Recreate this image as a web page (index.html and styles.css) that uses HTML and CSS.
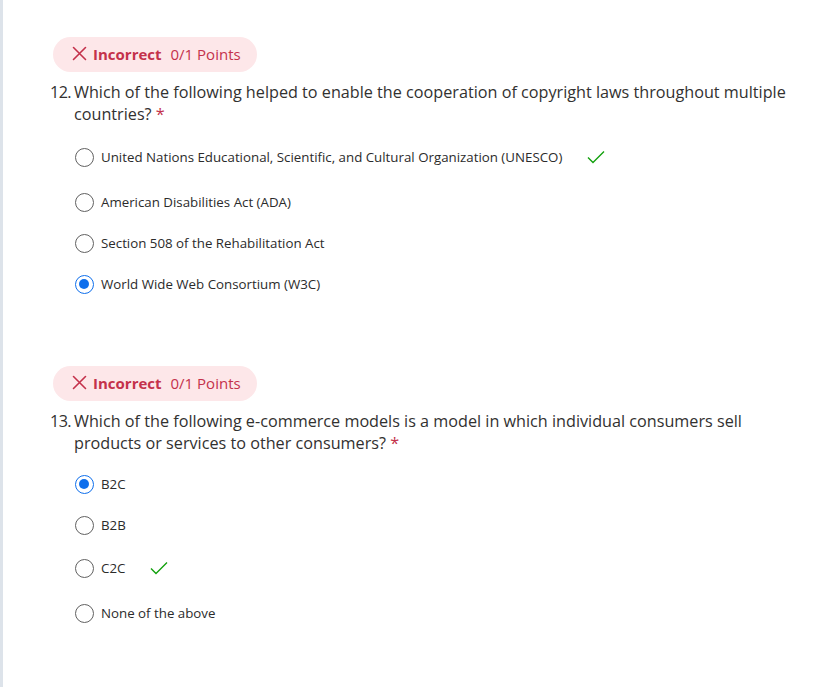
FILE: index.html
```html
<!DOCTYPE html>
<html lang="en">
<head>
<meta charset="utf-8">
<title>Quiz results</title>
<link rel="stylesheet" href="styles.css">
</head>
<body>
<div class="page">
  <main class="content">
    <section class="question">
      <div class="badge">
        <svg class="badge-x" width="15" height="15" viewBox="0 0 15 15"><path d="M1.5 1.5 L13.5 13.5 M13.5 1.5 L1.5 13.5" stroke="currentColor" stroke-width="1.6" fill="none" stroke-linecap="round"/></svg>
        <span class="badge-label">Incorrect</span>
        <span class="badge-points">0/1 Points</span>
      </div>
      <div class="q-title">
        <span class="q-num">12.</span>
        <span class="q-text">Which of the following helped to enable the cooperation of copyright laws throughout multiple countries? <span class="req">*</span></span>
      </div>
      <ul class="options">
        <li class="option correct"><span class="radio"></span><span class="opt-text">United Nations Educational, Scientific, and Cultural Organization (UNESCO)</span><svg class="check" width="18" height="14" viewBox="0 0 18 14"><path d="M1 7.5 L6 12.5 L17 1.5" stroke="currentColor" stroke-width="1.4" fill="none"/></svg></li>
        <li class="option"><span class="radio"></span><span class="opt-text">American Disabilities Act (ADA)</span></li>
        <li class="option"><span class="radio"></span><span class="opt-text">Section 508 of the Rehabilitation Act</span></li>
        <li class="option"><span class="radio checked"></span><span class="opt-text">World Wide Web Consortium (W3C)</span></li>
      </ul>
    </section>
    <section class="question">
      <div class="badge">
        <svg class="badge-x" width="15" height="15" viewBox="0 0 15 15"><path d="M1.5 1.5 L13.5 13.5 M13.5 1.5 L1.5 13.5" stroke="currentColor" stroke-width="1.6" fill="none" stroke-linecap="round"/></svg>
        <span class="badge-label">Incorrect</span>
        <span class="badge-points">0/1 Points</span>
      </div>
      <div class="q-title">
        <span class="q-num">13.</span>
        <span class="q-text">Which of the following e-commerce models is a model in which individual consumers sell products or services to other consumers? <span class="req">*</span></span>
      </div>
      <ul class="options">
        <li class="option"><span class="radio checked"></span><span class="opt-text">B2C</span></li>
        <li class="option"><span class="radio"></span><span class="opt-text">B2B</span></li>
        <li class="option correct"><span class="radio"></span><span class="opt-text">C2C</span><svg class="check" width="18" height="14" viewBox="0 0 18 14"><path d="M1 7.5 L6 12.5 L17 1.5" stroke="currentColor" stroke-width="1.4" fill="none"/></svg></li>
        <li class="option"><span class="radio"></span><span class="opt-text">None of the above</span></li>
      </ul>
    </section>
  </main>
</div>
</body>
</html>
```
FILE: styles.css
```css
* { box-sizing: border-box; }
html, body { margin: 0; padding: 0; background: #ffffff; }
body {
  font-family: "Open Sans", "Noto Sans", sans-serif;
  color: #323130;
}
.page {
  min-height: 687px;
  border-left: 3px solid #dde3ea;
  display: flex;
}
.content {
  padding: 37px 0 0 47px;
  flex: 1;
}
.question + .question { margin-top: 61px; }
.badge {
  display: inline-flex;
  align-items: center;
  height: 35px;
  margin-left: 3px;
  padding: 0 16px 2px 19px;
  border-radius: 18px;
  background: #fde7e9;
  color: #c4314b;
  font-size: 15px;
}
.badge-x { margin-right: 6px; }
.badge-label { font-weight: 700; margin-right: 9px; }
.badge-points { font-weight: 400; }
.q-title {
  display: flex;
  margin-top: 9px;
  font-size: 16.2px;
  line-height: 22px;
  color: #323130;
}
.q-num { width: 24px; flex: none; letter-spacing: -0.6px; }
.q-text { flex: 1; padding-right: 36px; }
.req { color: #c4314b; }
.options {
  list-style: none;
  margin: 10px 0 0 0;
  padding: 0 0 0 25px;
}
.option {
  display: flex;
  align-items: center;
  height: 41px;
  padding: 10px 0 11px;
  font-size: 13.3px;
  line-height: 20px;
  color: #2b2b2b;
}
.option.correct { height: 47px; padding: 12px 0 15px; }
.radio {
  width: 19px;
  height: 19px;
  border: 1px solid #616161;
  border-radius: 50%;
  flex: none;
  margin-right: 7px;
  position: relative;
}
.radio.checked { border: 1.5px solid #0f6fec; }
.radio.checked::after {
  content: "";
  position: absolute;
  left: 3px; top: 3px;
  width: 10px; height: 10px;
  border-radius: 50%;
  background: #0f6fec;
}
.check { color: #13a10e; margin-left: 25px; }
```
